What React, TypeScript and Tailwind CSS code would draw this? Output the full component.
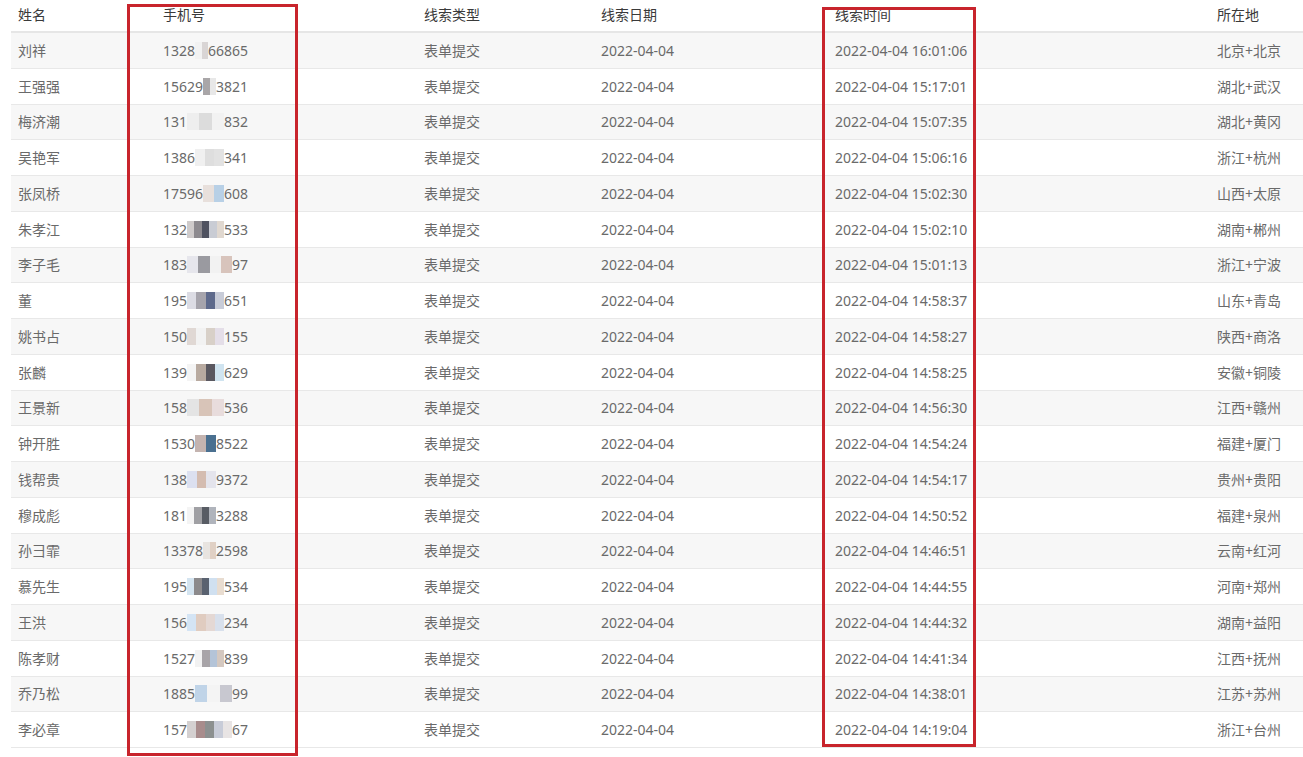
import React from "react";

type Row = {
  name: string;
  pre: string;
  blur: string[];
  suf: string;
  time: string;
  place: string;
};

const rows: Row[] = [
  { name: "刘祥", pre: "1328", blur: ["#f2f2f2", "#d9d5d5"], suf: "66865", time: "16:01:06", place: "北京+北京" },
  { name: "王强强", pre: "15629", blur: ["#a9a6a8", "#e8e8e8"], suf: "3821", time: "15:17:01", place: "湖北+武汉" },
  { name: "梅济潮", pre: "131", blur: ["#eeeeee", "#dcdcdc", "#f2f2f2"], suf: "832", time: "15:07:35", place: "湖北+黄冈" },
  { name: "吴艳军", pre: "1386", blur: ["#f0f0f0", "#dedede", "#e2e2e2"], suf: "341", time: "15:06:16", place: "浙江+杭州" },
  { name: "张凤桥", pre: "17596", blur: ["#e8e0dc", "#b8d0e6"], suf: "608", time: "15:02:30", place: "山西+太原" },
  { name: "朱孝江", pre: "132", blur: ["#cfcbcb", "#8d8a8f", "#4f5260", "#c9ccd4", "#e0d8d0"], suf: "533", time: "15:02:10", place: "湖南+郴州" },
  { name: "李子毛", pre: "183", blur: ["#e6e6ec", "#9a9aa0", "#f2f2f2", "#d8c4bc"], suf: "97", time: "15:01:13", place: "浙江+宁波" },
  { name: "董", pre: "195", blur: ["#dcdce4", "#a6a4ac", "#5e6a8c", "#c8ccd8"], suf: "651", time: "14:58:37", place: "山东+青岛" },
  { name: "姚书占", pre: "150", blur: ["#e0d8d4", "#f2f2f2", "#d8d0c8", "#e4dee8"], suf: "155", time: "14:58:27", place: "陕西+商洛" },
  { name: "张麟", pre: "139", blur: ["#f4f4f4", "#b8aaa0", "#5a5860", "#d0e4f0"], suf: "629", time: "14:58:25", place: "安徽+铜陵" },
  { name: "王景新", pre: "158", blur: ["#e4e4e4", "#d8c4b8", "#e8dcdc"], suf: "536", time: "14:56:30", place: "江西+赣州" },
  { name: "钟开胜", pre: "1530", blur: ["#c4b4b0", "#4a7090"], suf: "8522", time: "14:54:24", place: "福建+厦门" },
  { name: "钱帮贵", pre: "138", blur: ["#dce0f0", "#d4bcb0", "#e4e4ec"], suf: "9372", time: "14:54:17", place: "贵州+贵阳" },
  { name: "穆成彪", pre: "181", blur: ["#f4f4f4", "#a0a0a4", "#585c64", "#b0b4bc"], suf: "3288", time: "14:50:52", place: "福建+泉州" },
  { name: "孙彐霏", pre: "13378", blur: ["#e8e4e0", "#e0d0c4"], suf: "2598", time: "14:46:51", place: "云南+红河" },
  { name: "慕先生", pre: "195", blur: ["#d4e4f0", "#8c8a8c", "#5a6270", "#d0e0f0", "#e8dcd0"], suf: "534", time: "14:44:55", place: "河南+郑州" },
  { name: "王洪", pre: "156", blur: ["#d4e4f4", "#e0ccc0", "#e4d8d4", "#d8e0ec"], suf: "234", time: "14:44:32", place: "湖南+益阳" },
  { name: "陈孝财", pre: "1527", blur: ["#f2f2f2", "#a8a4a8", "#b4c4d8", "#d4c8c0"], suf: "839", time: "14:41:34", place: "江西+抚州" },
  { name: "乔乃松", pre: "1885", blur: ["#c0d4e8", "#f4f4f4", "#c8c8d0"], suf: "99", time: "14:38:01", place: "江苏+苏州" },
  { name: "李必章", pre: "157", blur: ["#d4d0d0", "#a88c8c", "#8c9090", "#c8ccd8", "#e8e4e4"], suf: "67", time: "14:19:04", place: "浙江+台州" },
];

const cols = "grid grid-cols-[145px_261px_177px_234px_382px_1fr]";

const Phone = ({ r }: { r: Row }) => (
  <span className="inline-flex w-[85px] items-center">
    <span>{r.pre}</span>
    <span className="flex h-[17px] flex-1">
      {r.blur.map((c, i) => (
        <span key={i} className="h-full flex-1" style={{ backgroundColor: c }} />
      ))}
    </span>
    <span>{r.suf}</span>
  </span>
);

const LeadTable = () => {
  return (
    <main
      className="relative h-[757px] w-[1303px] overflow-hidden bg-white text-[14px] text-[#6a6a6a]"
      style={{ fontFamily: '"Noto Sans", "Noto Sans CJK SC", sans-serif' }}
    >
      <div className="ml-[11px]">
        <div className={`${cols} h-[33px] items-center border-b-2 border-[#e6e6e6] pb-[3px] text-[#3a3a3a]`}>
          <div className="pl-[7px]">姓名</div>
          <div className="pl-[7px]">手机号</div>
          <div className="pl-[7px]">线索类型</div>
          <div className="pl-[7px]">线索日期</div>
          <div className="pl-[7px]">线索时间</div>
          <div className="pl-[7px]">所在地</div>
        </div>
        {rows.map((r, i) => (
          <div
            key={r.name + i}
            className={`${cols} h-[35.75px] items-center border-b border-[#e8e8e8] ${i % 2 === 0 ? "bg-[#f7f7f7]" : "bg-white"}`}
          >
            <div className="pl-[7px]">{r.name}</div>
            <div className="pl-[7px]">
              <Phone r={r} />
            </div>
            <div className="pl-[7px]">表单提交</div>
            <div className="pl-[7px]">2022-04-04</div>
            <div className="pl-[7px]">2022-04-04 {r.time}</div>
            <div className="pl-[7px]">{r.place}</div>
          </div>
        ))}
      </div>

      {/* red annotation boxes */}
      <div className="absolute left-[127px] top-[4px] h-[752px] w-[171px] border-[3px] border-[#c8242c]" />
      <div className="absolute left-[822px] top-[7px] h-[740px] w-[154px] border-[3px] border-[#c8242c]" />
    </main>
  );
};

export default function App() {
  return <LeadTable />;
}
